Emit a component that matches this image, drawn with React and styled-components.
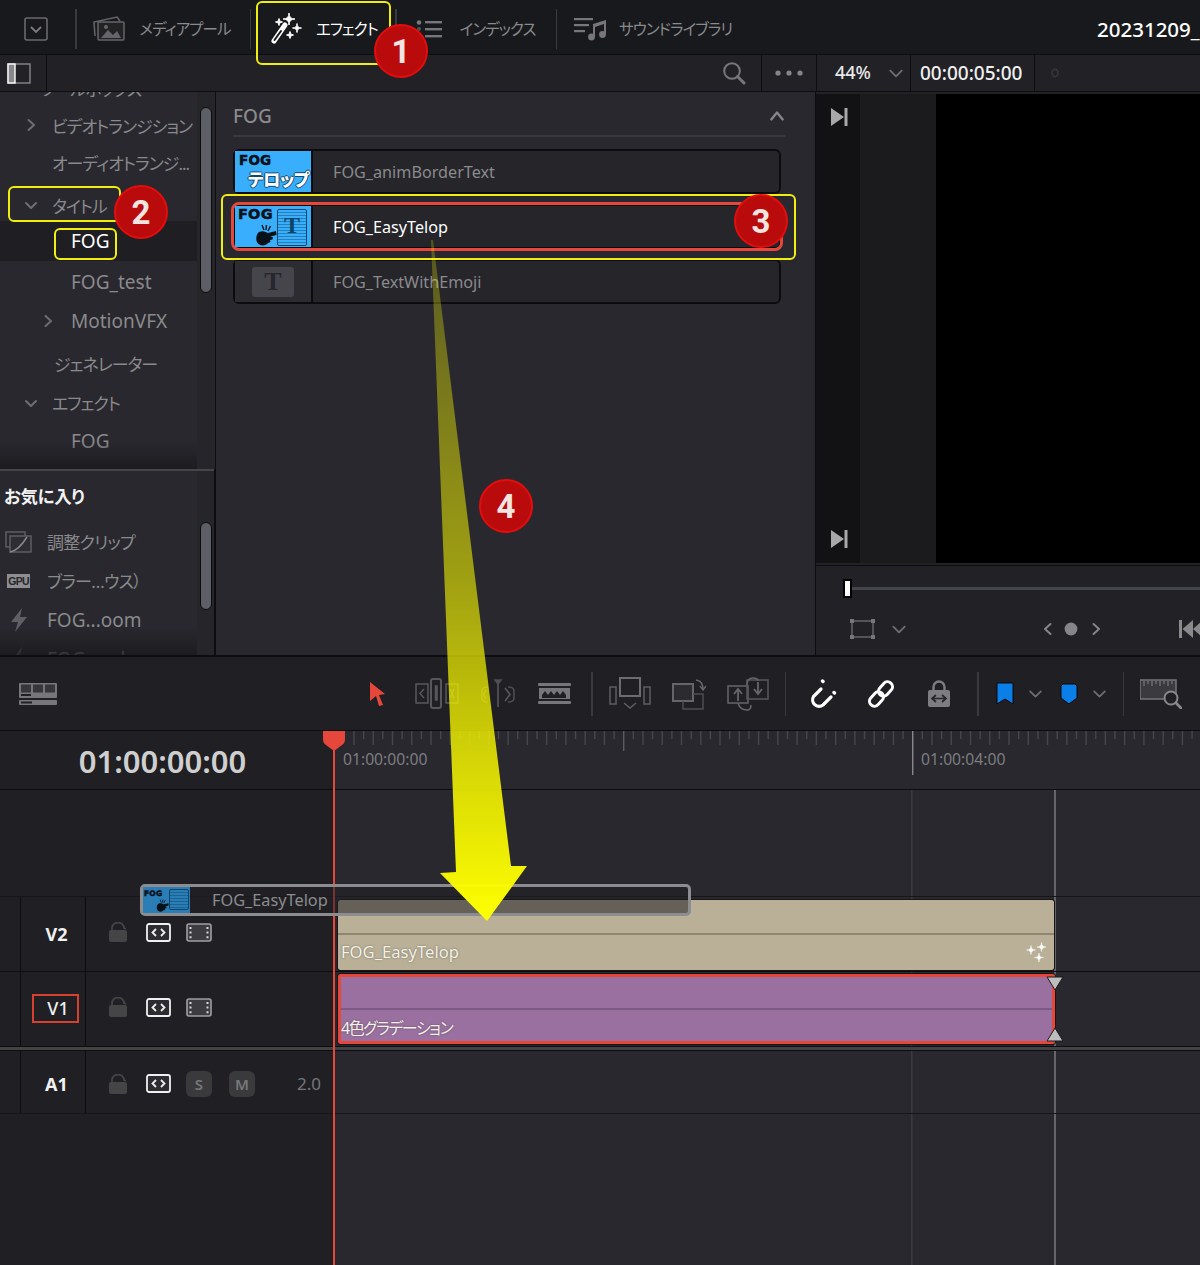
import React from 'react';
import styled, { createGlobalStyle } from 'styled-components';

const FONT = `"Noto Sans", "Noto Sans CJK JP", sans-serif`;
const GRAY = '#8a8a8c';
const ICON = '#6e6e72';
const RED = '#e5483a';

const GlobalStyle = createGlobalStyle`
  html, body { margin: 0; padding: 0; background: #1a1b1e; }
  body { font-family: ${FONT}; }
  * { box-sizing: border-box; }
`;

const Page = styled.div`
  position: relative;
  width: 1200px;
  height: 1265px;
  overflow: hidden;
  background: #0d0d0f;
  display: flex;
  flex-direction: column;
  font-feature-settings: "palt";
`;

/* top bar */
const TopBar = styled.div`
  height: 54px;
  flex-shrink: 0;
  background: #18191c;
  display: flex;
  align-items: center;
  margin-bottom: 1px;
  padding-top: 3px;
`;
const MenuBtn = styled.div`
  width: 75px;
  padding-left: 24px;
  display: flex;
`;
const Sep = styled.div`
  width: 1.5px;
  height: ${p => p.$h || 40}px;
  background: #3a3a3d;
  flex-shrink: 0;
`;
const Tab = styled.div`
  width: ${p => p.$w}px;
  padding-left: ${p => p.$pad}px;
  display: flex;
  align-items: center;
  gap: ${p => p.$gap}px;
  flex-shrink: 0;
`;
const TabLabel = styled.span`
  font-size: 15.5px;
  letter-spacing: -0.9px;
  color: ${p => (p.$on ? '#fff' : GRAY)};
  white-space: nowrap;
`;
const ProjectName = styled.div`
  margin-left: auto;
  width: 103px;
  flex-shrink: 0;
  overflow: hidden;
  white-space: nowrap;
  color: #fff;
  font-size: 20.5px;
  font-weight: 500;
`;

/* sub bar */
const SubBar = styled.div`
  height: 36px;
  flex-shrink: 0;
  display: flex;
  background: #212126;
  margin-bottom: 1px;
`;
const SubCell = styled.div`
  width: ${p => p.$w}px;
  flex: ${p => (p.$w ? 'none' : 1)};
  height: 100%;
  display: flex;
  align-items: center;
  justify-content: ${p => p.$justify || 'flex-start'};
  padding: ${p => p.$pad || '0'};
  border-right: ${p => (p.$line ? '1.5px solid #0d0d0f' : 'none')};
  gap: ${p => p.$gap || 0}px;
`;
const Zoom = styled.span`
  color: #e8e8e8;
  font-size: 18px;
  font-weight: 500;
  margin-top: -2px;
`;
const Timecode = styled.span`
  color: #f0f0f0;
  font-size: 19px;
  font-weight: 500;
`;

/* main panels */
const Main = styled.div`
  height: 563px;
  flex-shrink: 0;
  display: flex;
  margin-bottom: 2px;
`;
const Sidebar = styled.div`
  width: 214px;
  flex-shrink: 0;
  display: flex;
  flex-direction: column;
  background: #28282e;
  margin-right: 2px;
`;
const TreePane = styled.div`
  height: 379px;
  flex-shrink: 0;
  display: flex;
  border-bottom: 2px solid #45454a;
`;
const FavPane = styled.div`
  flex: 1;
  display: flex;
  min-height: 0;
  overflow: hidden;
`;
const ScrollList = styled.div`
  position: relative;
  width: 197px;
  overflow: hidden;
  flex-shrink: 0;
  &::after {
    content: '';
    position: absolute;
    left: 0;
    right: 0;
    bottom: 0;
    height: 28px;
    background: linear-gradient(to bottom, rgba(24, 24, 28, 0), rgba(24, 24, 28, 0.75));
  }
`;
const Gutter = styled.div`
  flex: 1;
  background: #25252a;
  padding: ${p => p.$top}px 3px 0;
`;
const Thumb = styled.div`
  height: ${p => p.$h}px;
  width: 12px;
  background: #5c6066;
  border: 1px solid #0b0b0d;
  border-radius: 6px;
`;
const TreeRow = styled.div`
  height: ${p => p.$h}px;
  margin-top: ${p => p.$mt || 0}px;
  padding-left: ${p => p.$indent}px;
  display: flex;
  align-items: center;
  position: relative;
  white-space: nowrap;
  background: ${p => (p.$sel ? '#1f1f23' : 'transparent')};
  color: ${p => (p.$sel ? '#fff' : GRAY)};
  font-size: ${p => (p.$latin ? 19 : 17)}px;
  letter-spacing: ${p => (p.$latin ? 0 : -1)}px;
`;
const Caret = styled.span`
  width: ${p => p.$w}px;
  display: flex;
  padding-right: ${p => p.$pr || 0}px;
`;
const FavTitle = styled.div`
  height: 51px;
  padding: 0 0 2px 4px;
  display: flex;
  align-items: center;
  color: #f2f2f2;
  font-size: 17.4px;
  font-weight: 600;
  letter-spacing: -0.3px;
`;
const FavRow = styled.div`
  height: 39px;
  display: flex;
  align-items: center;
  color: ${GRAY};
  font-size: ${p => (p.$latin ? 19 : 17)}px;
  letter-spacing: ${p => (p.$latin ? 0 : -0.7)}px;
  white-space: nowrap;
`;
const FavIconSlot = styled.span`
  width: 47px;
  padding-left: 5px;
  display: flex;
  flex-shrink: 0;
`;

const Center = styled.div`
  width: 599px;
  flex-shrink: 0;
  background: #28282e;
  padding: 0 30px 0 17px;
  margin-right: 1px;
`;
const BinHead = styled.div`
  height: 45px;
  display: flex;
  align-items: center;
  justify-content: space-between;
  border-bottom: 2px solid #38383e;
  padding: 5px 0 0 0;
  margin-bottom: 12px;
  color: ${GRAY};
  font-size: 19px;
  font-weight: 500;
`;
const CardList = styled.div`
  width: 548px;
  display: flex;
  flex-direction: column;
  gap: 10px;
`;
const Card = styled.div`
  height: 45px;
  display: flex;
  align-items: center;
  background: #25252a;
  border: 2px solid #0c0c0e;
  border-radius: 6px;
  color: ${p => (p.$sel ? '#fff' : GRAY)};
  font-size: 16.2px;
  outline: ${p => (p.$sel ? `3px solid ${RED}` : 'none')};
  outline-offset: -1px;
`;
const CardThumb = styled.div`
  position: relative;
  width: 78px;
  height: 100%;
  flex-shrink: 0;
  overflow: hidden;
  margin-right: 20px;
  border-right: 2px solid #0c0c0e;
  background: ${p => p.$bg};
  display: flex;
  align-items: center;
  justify-content: center;
`;
const FogMark = styled.span`
  position: absolute;
  left: ${p => p.$x}px;
  top: ${p => p.$y}px;
  color: #07111a;
  font-family: "DejaVu Sans", sans-serif;
  font-size: ${p => p.$size || 13.5}px;
  font-weight: 800;
  line-height: 1;
  letter-spacing: 0.2px;
  -webkit-text-stroke: 0.5px #07111a;
`;
const TelopMark = styled.span`
  position: absolute;
  right: 2px;
  bottom: 0;
  color: #fff;
  font-size: 17px;
  font-weight: 900;
  line-height: 24px;
  letter-spacing: -0.5px;
  text-shadow: -1px 0 #12496f, 1px 0 #12496f, 0 -1px #12496f, 0 1px #12496f;
`;
const HandSlot = styled.span`
  position: absolute;
  left: ${p => p.$x}px;
  top: ${p => p.$y}px;
  display: flex;
`;
const TFrame = styled.span`
  position: absolute;
  right: ${p => p.$small ? 1 : 4}px;
  top: ${p => p.$small ? 2 : 3}px;
  width: ${p => p.$small ? 20 : 30}px;
  height: ${p => p.$small ? 21 : 37}px;
  border: 1.5px solid #0a4469;
  border-radius: 2px;
  color: #0a4469;
  font-family: "Liberation Serif", serif;
  font-size: ${p => p.$small ? 14 : 24}px;
  font-weight: 700;
  line-height: ${p => p.$small ? 18 : 31}px;
  text-align: center;
  background: repeating-linear-gradient(to bottom, transparent 0 2px, rgba(10, 68, 105, 0.45) 2px 3px);
`;
const TBlank = styled.span`
  width: 42px;
  height: 30px;
  border-radius: 3px;
  background: #45454b;
  color: #26262b;
  font-family: "Liberation Serif", serif;
  font-size: 26px;
  font-weight: 700;
  line-height: 30px;
  text-align: center;
`;

const Monitor = styled.div`
  flex: 1;
  display: flex;
  flex-direction: column;
  background: #212126;
`;
const ViewerRow = styled.div`
  height: 469px;
  margin-top: 2px;
  flex-shrink: 0;
  display: flex;
  background: #1b1b1d;
`;
const SkipStrip = styled.div`
  width: 44px;
  background: #121214;
  display: flex;
  flex-direction: column;
  justify-content: space-between;
  align-items: center;
  padding: 14px 0 15px 3px;
`;
const Screen = styled.div`
  flex: 1;
  margin-left: 76px;
  background: #000;
`;
const ScrubRow = styled.div`
  height: 46px;
  margin-top: 2px;
  display: flex;
  align-items: center;
  padding-left: 27px;
  border-top: 1px solid #0d0d0f;
`;
const ScrubHandle = styled.div`
  width: 9px;
  height: 19px;
  background: #fff;
  border: 2px solid #000;
  flex-shrink: 0;
`;
const ScrubLine = styled.div`
  flex: 1;
  height: 3px;
  background: #44444c;
`;
const MonitorTools = styled.div`
  height: 36px;
  display: flex;
  align-items: center;
  padding-left: 34px;
`;
const ToolGap = styled.span`
  display: flex;
  margin-left: ${p => p.$ml}px;
  flex-shrink: 0;
`;

/* timeline */
const EditBar = styled.div`
  height: 73px;
  flex-shrink: 0;
  display: flex;
  align-items: center;
  background: #1f1f24;
  margin-bottom: 1px;
`;
const RulerRow = styled.div`
  height: 58px;
  flex-shrink: 0;
  display: flex;
  margin-bottom: 1px;
`;
const HeadCell = styled.div`
  width: 334px;
  flex-shrink: 0;
  background: #1f1f24;
  border-right: 1.5px solid #0d0d0f;
  display: flex;
  align-items: center;
  justify-content: center;
  color: #cfcfcf;
  font-size: 31px;
  font-weight: 600;
  padding: 2px 8px 0 0;
`;
const Ruler = styled.div`
  flex: 1;
  position: relative;
  background: #28282e;
  display: flex;
  align-items: flex-start;
  padding: 17px 0 0 9px;
  color: #7d7d80;
  font-size: 15.7px;
`;
const RulerTicks = styled.svg`
  position: absolute;
  left: 0;
  top: 0;
`;
const RulerLabel = styled.span`
  width: ${p => p.$w}px;
  flex-shrink: 0;
`;

const Tracks = styled.div`
  flex: 1;
  display: flex;
  flex-direction: column;
  background: #28282e;
  min-height: 0;
`;
const TrackRow = styled.div`
  height: ${p => p.$h}px;
  flex: ${p => (p.$h ? 'none' : 1)};
  display: flex;
  border-bottom: ${p => (p.$line ? `1px solid ${p.$line}` : 'none')};
`;
const TrackHead = styled.div`
  width: 334px;
  flex-shrink: 0;
  display: flex;
  align-items: center;
  background: #1f1f24;
  border-right: 1.5px solid #0d0d0f;
`;
const TrackPad = styled.div`
  width: 21px;
  height: 100%;
  border-right: 1.5px solid #0d0d0f;
  flex-shrink: 0;
`;
const TrackNameCell = styled.div`
  width: 65px;
  height: 100%;
  flex-shrink: 0;
  display: flex;
  align-items: center;
  justify-content: center;
  padding: ${p => (p.$nudge ? 3 : 0)}px 0 0 ${p => (p.$boxed ? 0 : 7)}px;
  border-right: 1.5px solid #0d0d0f;
`;
const TrackName = styled.span`
  color: #f0f0f0;
  font-size: 18px;
  font-weight: ${p => (p.$boxed ? 500 : 700)};
  display: flex;
  align-items: center;
  justify-content: center;
  ${p => p.$boxed && `
    width: 47px;
    height: 29px;
    margin: -2px 0 0 5px;
    padding-left: 5px;
    border: 2px solid #d5402f;
  `}
`;
const TrackControls = styled.div`
  display: flex;
  align-items: center;
  flex: 1;
  padding: ${p => p.$pt || 0}px 0 0 22px;
  margin-top: ${p => p.$mt || 0}px;
`;
const SoloBtn = styled.span`
  width: 26px;
  height: 26px;
  margin-left: ${p => p.$ml}px;
  border-radius: 6px;
  background: #3a3a3c;
  color: #77777a;
  font-size: 15px;
  font-weight: 600;
  display: flex;
  align-items: center;
  justify-content: center;
`;
const Gain = styled.span`
  margin-left: 42px;
  color: #77777a;
  font-size: 17px;
`;
const Lane = styled.div`
  flex: 1;
  position: relative;
  padding-left: 4px;
  background:
    linear-gradient(#3a3a3f, #3a3a3f) 577px 0 / 1.5px 100% no-repeat,
    linear-gradient(#66666a, #66666a) 720px 0 / 2px 100% no-repeat,
    #28282e;
`;
const Clip = styled.div`
  position: relative;
  width: ${p => (p.$sel ? 717 : 716)}px;
  height: 70px;
  margin-top: ${p => p.$mt}px;
  background: ${p => p.$bg};
  border-radius: 2px;
  border: ${p => (p.$sel ? `3px solid ${RED}` : 'none')};
  outline: 1px solid #161618;
  display: flex;
  flex-direction: column;
  color: #fff;
`;
const ClipTop = styled.div`
  height: ${p => (p.$sel ? 33 : 35)}px;
  flex-shrink: 0;
  border-bottom: 2px solid ${p => p.$line};
`;
const ClipName = styled.div`
  flex: 1;
  display: flex;
  align-items: center;
  padding: ${p => (p.$sel ? 5 : 0)}px 0 0 ${p => (p.$sel ? 0 : 3)}px;
  font-size: ${p => p.$size}px;
  letter-spacing: ${p => (p.$sel ? -1.5 : 0)}px;
  white-space: nowrap;
  line-height: 1;
  color: #f4f1e6;
  text-shadow: 0 0 2px rgba(40, 40, 40, 0.55);
`;
const Sparkles = styled.span`
  position: absolute;
  right: 6px;
  bottom: 7px;
  display: flex;
`;
const TrimMark = styled.svg`
  position: absolute;
  left: ${p => p.$x}px;
  top: ${p => p.$y}px;
  z-index: 2;
`;
const DividerBar = styled.div`
  height: 5px;
  flex-shrink: 0;
  background: #434346;
  border-top: 1px solid #0d0d0f;
  border-bottom: 1px solid #0d0d0f;
`;
const Playhead = styled.svg`
  position: absolute;
  left: 322px;
  top: 731px;
  z-index: 3;
`;

/* dragged clip floats over the timeline */
const DragGhost = styled.div`
  position: absolute;
  left: 140px;
  top: 884px;
  width: 551px;
  height: 32px;
  border: 3px solid #8c8d90;
  border-radius: 5px;
  background: rgba(32, 32, 36, 0.55);
  display: flex;
  align-items: center;
  color: #8c8c8e;
  font-size: 16.3px;
  z-index: 4;
`;
const GhostThumb = styled.div`
  position: relative;
  width: 47px;
  height: 100%;
  background: #2a7db5;
  margin-right: 22px;
  flex-shrink: 0;
  overflow: hidden;
`;

/* tutorial marks laid over the screenshot */
const Callout = styled.div`
  position: absolute;
  left: ${p => p.$x}px;
  top: ${p => p.$y}px;
  width: ${p => p.$w}px;
  height: ${p => p.$h}px;
  border: 2.5px solid #f0ee10;
  border-radius: 6px;
  z-index: 5;
`;
const Badge = styled.div`
  position: absolute;
  left: ${p => p.$x - 27}px;
  top: ${p => p.$y - 27}px;
  width: 54px;
  height: 54px;
  border-radius: 50%;
  background: #b90b0b;
  border: 2px solid #e40d0d;
  color: #f2e4e0;
  font-family: Roboto, sans-serif;
  font-size: 33px;
  font-weight: 700;
  display: flex;
  align-items: center;
  justify-content: center;
  z-index: 7;
`;
const BigArrow = styled.svg`
  position: absolute;
  left: 0;
  top: 0;
  z-index: 6;
  pointer-events: none;
`;

const Chevron = ({ dir = 'down', size = 14, color = ICON, sw = 2 }) => {
  const d = {
    down: 'M2 5 L7 10 L12 5',
    up: 'M2 10 L7 4 L12 10',
    right: 'M4.5 2 L10 7 L4.5 12',
    left: 'M9.5 2 L4 7 L9.5 12',
  }[dir];
  return (
    <svg width={size} height={size} viewBox="0 0 14 14" fill="none">
      <path d={d} stroke={color} strokeWidth={sw} strokeLinecap="round" strokeLinejoin="round" />
    </svg>
  );
};

const MenuIcon = () => (
  <svg width="24" height="24" viewBox="0 0 24 24" fill="none">
    <rect x="1" y="1" width="22" height="22" rx="2" stroke="#6a6a6e" strokeWidth="1.6" />
    <path d="M7 10 L12 15 L17 10" stroke="#7c7c80" strokeWidth="1.8" />
  </svg>
);
const MediaIcon = () => (
  <svg width="32" height="25" viewBox="0 0 32 25" fill="none" stroke="#66666a" strokeWidth="1.5">
    <path d="M2 20 L1 6 L24 1 L27 5" />
    <rect x="5" y="6" width="26" height="18" rx="1" fill="#232326" />
    <path d="M8 22 L15 14 L20 19 L24 15 L28 22 Z" fill="#66666a" stroke="none" />
    <circle cx="13" cy="11" r="2" fill="#66666a" stroke="none" />
  </svg>
);
const star = (x, y, r) =>
  `M${x} ${y - r} Q${x} ${y} ${x + r} ${y} Q${x} ${y} ${x} ${y + r} Q${x} ${y} ${x - r} ${y} Q${x} ${y} ${x} ${y - r} Z`;
const WandIcon = () => (
  <svg width="31" height="32" viewBox="0 0 31 32" fill="#fff">
    <path d="M3 28 L14 12" stroke="#fff" strokeWidth="5" strokeLinecap="round" />
    <path d="M3.5 27 L10 18" stroke="#18191c" strokeWidth="2" strokeLinecap="round" />
    <path d={star(18, 6, 6)} stroke="#fff" />
    <path d={star(26, 15, 4.5)} stroke="#fff" />
    <path d={star(8, 9, 3.5)} stroke="#fff" />
    <path d={star(19, 22, 3.5)} stroke="#fff" />
  </svg>
);
const IndexIcon = () => (
  <svg width="27" height="18" viewBox="0 0 27 18" fill="#77777b">
    <circle cx="3" cy="2.5" r="2.3" />
    <circle cx="3" cy="9" r="2" opacity="0.6" />
    <circle cx="3" cy="15.5" r="2.3" />
    <rect x="9" y="1" width="17" height="2.4" />
    <rect x="9" y="8" width="17" height="2.4" />
    <rect x="9" y="15" width="17" height="2.4" />
  </svg>
);
const SoundIcon = () => (
  <svg width="33" height="25" viewBox="0 0 33 25" fill="#77777b">
    <rect x="0" y="2" width="19" height="2.2" />
    <rect x="0" y="8" width="15" height="2.2" />
    <rect x="0" y="14" width="11" height="2.2" />
    <path d="M19 8 L32 4 L32 18 L30 18 L30 8 L21 11 L21 21 L19 21 Z" />
    <circle cx="17.5" cy="21" r="3.4" />
    <circle cx="28.5" cy="18.5" r="3.4" />
  </svg>
);
const PanelIcon = () => (
  <svg width="24" height="21" viewBox="0 0 24 21" fill="none">
    <rect x="1" y="1" width="22" height="19" stroke="#88888c" strokeWidth="1.4" />
    <rect x="1" y="1" width="7" height="19" fill="#88888c" stroke="#fff" strokeWidth="1.4" />
  </svg>
);
const SearchIcon = () => (
  <svg width="24" height="24" viewBox="0 0 24 24" fill="none" stroke="#77777b">
    <circle cx="10" cy="10" r="7.8" strokeWidth="2" />
    <path d="M15.5 15.5 L22 22" strokeWidth="3" strokeLinecap="round" />
  </svg>
);
const DotsIcon = () => (
  <svg width="28" height="8" viewBox="0 0 28 8" fill="#85858a">
    <circle cx="3" cy="4" r="2.6" />
    <circle cx="14" cy="4" r="2.6" />
    <circle cx="25" cy="4" r="2.6" />
  </svg>
);
const SkipIcon = () => (
  <svg width="17" height="18" viewBox="0 0 17 18" fill="#a8a8aa">
    <path d="M0 0 L13 9 L0 18 Z" />
    <rect x="13.5" y="0" width="3" height="18" />
  </svg>
);
const RateDot = () => (
  <svg width="8" height="10" viewBox="0 0 8 10" fill="none">
    <ellipse cx="4" cy="5" rx="3" ry="3.6" stroke="#38383b" strokeWidth="1.6" />
  </svg>
);
const CropIcon = () => (
  <svg width="25" height="20" viewBox="0 0 25 20" fill="#77777b" stroke="#77777b">
    <rect x="2" y="2" width="21" height="16" fill="none" strokeWidth="1.2" />
    <rect x="0.5" y="0.5" width="3" height="3" />
    <rect x="21.5" y="0.5" width="3" height="3" />
    <rect x="0.5" y="16.5" width="3" height="3" />
    <rect x="21.5" y="16.5" width="3" height="3" />
  </svg>
);
const NavDot = () => (
  <svg width="14" height="14" viewBox="0 0 14 14" fill="#85858a">
    <circle cx="7" cy="7" r="6.4" />
  </svg>
);
const RewindIcon = () => (
  <svg width="24" height="20" viewBox="0 0 24 20" fill="#8a8a8c">
    <rect x="0" y="1" width="3" height="18" />
    <path d="M3.5 10 L14 1 L14 19 Z" />
    <path d="M14 10 L24 1 L24 19 Z" />
  </svg>
);
const AdjustIcon = () => (
  <svg width="27" height="22" viewBox="0 0 27 22" fill="none" stroke="#5d5d62" strokeWidth="1.5">
    <rect x="1" y="1" width="19" height="15" />
    <rect x="5" y="5" width="21" height="16" fill="#2d2d33" />
    <path d="M5 21 C12 20 17 14 22 6" stroke="#88888c" />
  </svg>
);
const GpuIcon = () => (
  <svg width="25" height="16" viewBox="-2 0 25 16">
    <rect x="0" y="1" width="23" height="14" fill="#8e8e90" />
    <text x="11.5" y="12" textAnchor="middle" fontFamily="Liberation Sans, sans-serif" fontSize="10.5" fontWeight="700" fill="#26262b">GPU</text>
  </svg>
);
const BoltIcon = () => (
  <svg width="23" height="24" viewBox="-5 0 23 24" fill="#5f5f64">
    <path d="M12 0 L1 14 L8 14 L5 24 L17 9 L10 9 Z" />
  </svg>
);
const HandIcon = ({ size = 22, color = '#07111a' }) => (
  <svg width={size} height={size} viewBox="0 0 22 22" fill={color}>
    <path d="M4 8 C8 6 11 8 13 9 L21 7 L21.5 11 L15 12.5 L18 13 L17.5 15.5 L15 16 L15.5 18 L13 19 C11 22 5 22.5 2.5 19 C0.5 16 1 10 4 8 Z" />
    <path d="M7 1 L9 6 M11.5 1 L11 6 M15.5 2 L13 7" stroke={color} strokeWidth="1.4" fill="none" />
  </svg>
);
const LayoutIcon = () => (
  <svg width="38" height="22" viewBox="0 0 38 22" fill="#77777b">
    <rect x="0" y="0" width="38" height="15" rx="1" />
    <rect x="2" y="1.5" width="10" height="8" fill="#37373b" />
    <rect x="14" y="1.5" width="10" height="8" fill="#37373b" />
    <rect x="26" y="1.5" width="10" height="8" fill="#37373b" />
    <rect x="2" y="11" width="10" height="2" fill="#1f1f24" />
    <rect x="0" y="17" width="38" height="5" rx="1" />
    <rect x="2" y="18.5" width="11" height="2" fill="#1f1f24" />
  </svg>
);
const PointerIcon = () => (
  <svg width="20" height="26" viewBox="0 0 20 26" fill={RED}>
    <path d="M2 1 L17 13 L11 14 L15 24 L11 25 L8 15 L2 20 Z" />
  </svg>
);
const TrimIcon = () => (
  <svg width="44" height="32" viewBox="0 0 44 32" fill="none" stroke="#58585c" strokeWidth="1.5">
    <rect x="1" y="6" width="12" height="19" />
    <path d="M9 11 L5 15.5 L9 20" />
    <rect x="31" y="6" width="12" height="19" />
    <path d="M35 11 L39 20 M39 11 L35 20" />
    <rect x="16" y="1" width="10" height="29" rx="2" strokeWidth="2" />
    <rect x="20.5" y="8" width="1.5" height="14" fill="#58585c" />
  </svg>
);
const DynTrimIcon = () => (
  <svg width="36" height="30" viewBox="0 0 36 30" fill="none" stroke="#4e4e52" strokeWidth="1.6">
    <path d="M8 8 Q2 8 2 12 L2 19 Q2 23 8 23" />
    <path d="M6 11 L3.5 15.5 L6 20" />
    <path d="M28 8 Q34 8 34 12 L34 19 Q34 23 28 23" />
    <path d="M25 9 L30 15.5 L25 22" stroke="#58585c" />
    <path d="M18 3 L18 28" stroke="#58585c" />
    <path d="M15 1 L21 1 L18 5 Z" fill="#58585c" />
  </svg>
);
const BladeIcon = () => (
  <svg width="33" height="21" viewBox="0 0 33 21" fill="#77777b">
    <rect x="0" y="0" width="33" height="3" rx="1" />
    <rect x="0" y="18" width="33" height="3" rx="1" />
    <rect x="1" y="5" width="31" height="11" />
    <path d="M4 12 L7 8 L10 12 L13 8 L16 12 L19 8 L22 12 L25 8 L28 12 L28 15 L4 15 Z" fill="#1f1f24" />
  </svg>
);
const InsertIcon = () => (
  <svg width="42" height="33" viewBox="0 0 42 33" fill="none" stroke="#5e5e62" strokeWidth="1.5">
    <rect x="1" y="10" width="6" height="17" />
    <rect x="35" y="10" width="6" height="17" />
    <rect x="11" y="1" width="20" height="18" strokeWidth="2" stroke="#6c6c70" />
    <path d="M15 26 L21 31 L27 26" />
  </svg>
);
const OverwriteIcon = () => (
  <svg width="34" height="32" viewBox="0 0 34 32" fill="none" stroke="#66666a" strokeWidth="1.5">
    <rect x="1" y="6" width="20" height="17" fill="#2c2c30" strokeWidth="2" />
    <path d="M21 16 L31 16 L31 31 L11 31 L11 23" stroke="#4e4e52" />
    <path d="M24 2 Q31 3 31 11 M28 8 L31 12 L34 8" />
  </svg>
);
const ReplaceIcon = () => (
  <svg width="42" height="34" viewBox="0 0 42 34" fill="none" stroke="#66666a" strokeWidth="1.5">
    <rect x="1" y="9" width="20" height="17" />
    <rect x="20" y="3" width="21" height="19" stroke="#58585c" />
    <path d="M11 24 L11 13 M7 17 L11 12 L15 17" strokeWidth="1.8" />
    <path d="M31 5 L31 16 M27 12 L31 17 L35 12" strokeWidth="1.8" />
    <path d="M11 26 Q13 33 20 33 Q24 33 24 28" />
    <path d="M20 8 Q20 1 26 1 Q31 1 31 4" />
  </svg>
);
const MagnetIcon = () => (
  <svg width="28" height="30" viewBox="0 0 28 30" fill="none" stroke="#fff">
    <path d="M12 10 L4.5 17.5 A6.5 6.5 0 0 0 14 26 L22 18" strokeWidth="3.2" strokeLinecap="round" />
    <path d="M13.5 2 L14 2.5 M25 13.5 L25.5 14" strokeWidth="3.4" strokeLinecap="round" />
  </svg>
);
const LinkIcon = () => (
  <svg width="26" height="28" viewBox="0 0 26 28" fill="none" stroke="#fff" strokeWidth="3">
    <rect x="0.5" y="14" width="16" height="10" rx="5" transform="rotate(-48 8.5 19)" />
    <rect x="9.5" y="4" width="16" height="10" rx="5" transform="rotate(-48 17.5 9)" />
  </svg>
);
const LockLinkIcon = () => (
  <svg width="24" height="28" viewBox="0 0 24 28" fill="#7e7e82">
    <path d="M6.5 11 L6.5 7 A5.5 5.5 0 0 1 17.5 7 L17.5 11" fill="none" stroke="#7e7e82" strokeWidth="2.4" />
    <rect x="1" y="10" width="22" height="17" rx="2" />
    <path d="M9 15 L5 18.5 L9 22 M15 15 L19 18.5 L15 22 M5 18.5 L19 18.5" fill="none" stroke="#26262b" strokeWidth="1.7" />
  </svg>
);
const FlagIcon = () => (
  <svg width="18" height="23" viewBox="0 0 18 23" fill="#0b7fe8" stroke="#08080a">
    <path d="M1 1 L17 1 L17 22 L9 17 L1 22 Z" strokeWidth="1" />
  </svg>
);
const MarkerIcon = () => (
  <svg width="18" height="22" viewBox="0 0 18 22" fill="#0b7fe8" stroke="#08080a">
    <path d="M3 1 L15 1 L17 3 L17 15 L9 21 L1 15 L1 3 Z" strokeWidth="1" />
  </svg>
);
const RulerZoomIcon = () => (
  <svg width="42" height="30" viewBox="0 0 42 30" fill="none">
    <rect x="0" y="1" width="36" height="19" fill="#3b3b3f" stroke="#77777b" strokeWidth="1.5" />
    <path d="M4 2 V7 M8 2 V5 M12 2 V7 M16 2 V5 M20 2 V7 M24 2 V5 M28 2 V7 M32 2 V5" stroke="#85858a" />
    <circle cx="31" cy="19" r="6.5" fill="#1f1f24" stroke="#88888c" strokeWidth="2" />
    <path d="M36 24 L41 29" stroke="#88888c" strokeWidth="2.6" strokeLinecap="round" />
  </svg>
);
const LockIcon = () => (
  <svg width="20" height="20" viewBox="0 0 20 20" fill="#454548">
    <path d="M4 9 L4 6 A6 5.4 0 0 1 16 6 L18 7" fill="none" stroke="#454548" strokeWidth="1.8" />
    <rect x="1" y="8" width="18" height="12" rx="2" />
  </svg>
);
const CodeIcon = () => (
  <svg width="25" height="19" viewBox="0 0 25 19" fill="none" stroke="#f0f0f0">
    <rect x="1" y="1" width="23" height="17" rx="2" strokeWidth="1.8" fill="#2d2d31" />
    <path d="M10 6 L6.5 9.5 L10 13 M15 6 L18.5 9.5 L15 13" strokeWidth="1.8" />
  </svg>
);
const FilmIcon = () => (
  <svg width="26" height="19" viewBox="0 0 26 19" fill="#3d3d41" stroke="#a0a0a3">
    <rect x="1" y="1" width="24" height="17" rx="2" strokeWidth="1.6" />
    <path d="M4.5 4 V15.5 M21.5 4 V15.5" stroke="#d8d8d8" strokeWidth="2" strokeDasharray="2 2.6" />
  </svg>
);
const SparkleIcon = () => (
  <svg width="22" height="22" viewBox="0 0 22 22" fill="#fff">
    <path d={star(5, 9, 4.5)} stroke="#fff" strokeWidth="0.5" />
    <path d={star(15.5, 6, 4.5)} stroke="#fff" strokeWidth="0.5" />
    <path d={star(13, 16.5, 4.5)} stroke="#fff" strokeWidth="0.5" />
  </svg>
);

// 15 ticks per second, 144.5px per second
const ticks = Array.from({ length: 90 }, (_, i) => {
  const major = i % 60 === 0;
  const second = i % 30 === 0;
  return {
    x: i * (144.5 / 15),
    h: i === 0 ? 0 : major ? 44 : second ? 20 : i % 2 === 0 ? 14 : 8,
    c: major ? '#88888c' : second ? '#5b5b60' : '#46464c',
  };
});

const App = () => (
  <Page>
    <GlobalStyle />

    <TopBar>
      <MenuBtn><MenuIcon /></MenuBtn>
      <Sep />
      <Tab $w={173} $pad={16} $gap={15}><MediaIcon /><TabLabel>メディアプール</TabLabel></Tab>
      <Sep />
      <Tab $w={144} $pad={20} $gap={14}><WandIcon /><TabLabel $on>エフェクト</TabLabel></Tab>
      <Sep />
      <Tab $w={159} $pad={19} $gap={17}><IndexIcon /><TabLabel>インデックス</TabLabel></Tab>
      <Sep />
      <Tab $w={200} $pad={17} $gap={12}><SoundIcon /><TabLabel>サウンドライブラリ</TabLabel></Tab>
      <ProjectName>20231209_</ProjectName>
    </TopBar>

    <SubBar>
      <SubCell $w={47} $line $pad="0 0 0 7px"><PanelIcon /></SubCell>
      <SubCell $w={715} $line $justify="flex-end" $pad="0 15px 0 0"><SearchIcon /></SubCell>
      <SubCell $w={55} $line $justify="center"><DotsIcon /></SubCell>
      <SubCell $w={94} $line $pad="0 0 0 18px" $gap={17}>
        <Zoom>44%</Zoom>
        <Chevron size={16} sw={1.6} />
      </SubCell>
      <SubCell $w={124} $line $pad="0 0 0 9px"><Timecode>00:00:05:00</Timecode></SubCell>
      <SubCell $pad="0 0 0 16px"><RateDot /></SubCell>
    </SubBar>

    <Main>
      <Sidebar>
        <TreePane>
          <ScrollList>
            <TreeRow $h={36} $mt={-22} $indent={40}>ツールボックス</TreeRow>
            <TreeRow $h={38} $indent={24}>
              <Caret $w={28} $pr={14}><Chevron dir="right" /></Caret>ビデオトランジション
            </TreeRow>
            <TreeRow $h={36} $indent={52}>オーディオトランジ...</TreeRow>
            <TreeRow $h={32} $mt={9} $indent={24}>
              <Caret $w={28} $pr={14}><Chevron /></Caret>タイトル
            </TreeRow>
            <TreeRow $h={40} $indent={71} $sel $latin>FOG</TreeRow>
            <TreeRow $h={39} $mt={1} $indent={71} $latin>FOG_test</TreeRow>
            <TreeRow $h={39} $indent={41} $latin>
              <Caret $w={30} $pr={16}><Chevron dir="right" /></Caret>MotionVFX
            </TreeRow>
            <TreeRow $h={43} $mt={2} $indent={54}>ジェネレーター</TreeRow>
            <TreeRow $h={35} $indent={24}>
              <Caret $w={28} $pr={14}><Chevron /></Caret>エフェクト
            </TreeRow>
            <TreeRow $h={41} $indent={71} $latin>FOG</TreeRow>
          </ScrollList>
          <Gutter $top={15}><Thumb $h={186} /></Gutter>
        </TreePane>
        <FavPane>
          <ScrollList>
            <FavTitle>お気に入り</FavTitle>
            <FavRow><FavIconSlot><AdjustIcon /></FavIconSlot>調整クリップ</FavRow>
            <FavRow><FavIconSlot><GpuIcon /></FavIconSlot>ブラー…ウス）</FavRow>
            <FavRow $latin><FavIconSlot><BoltIcon /></FavIconSlot>FOG...oom</FavRow>
            <FavRow $latin><FavIconSlot><BoltIcon /></FavIconSlot>FOG...ask</FavRow>
          </ScrollList>
          <Gutter $top={51}><Thumb $h={88} /></Gutter>
        </FavPane>
      </Sidebar>

      <Center>
        <BinHead>
          FOG
          <Chevron dir="up" size={16} color="#88888c" />
        </BinHead>
        <CardList>
          <Card>
            <CardThumb $bg="#38aefc">
              <FogMark $x={4} $y={3}>FOG</FogMark>
              <TelopMark>テロップ</TelopMark>
            </CardThumb>
            FOG_animBorderText
          </Card>
          <Card $sel>
            <CardThumb $bg="#38aefc">
              <FogMark $x={3} $y={1} $size={14.5}>FOG</FogMark>
              <HandSlot $x={20} $y={18}><HandIcon /></HandSlot>
              <TFrame>T</TFrame>
            </CardThumb>
            FOG_EasyTelop
          </Card>
          <Card>
            <CardThumb $bg="#2c2c31"><TBlank>T</TBlank></CardThumb>
            FOG_TextWithEmoji
          </Card>
        </CardList>
      </Center>

      <Monitor>
        <ViewerRow>
          <SkipStrip><SkipIcon /><SkipIcon /></SkipStrip>
          <Screen />
        </ViewerRow>
        <ScrubRow><ScrubHandle /><ScrubLine /></ScrubRow>
        <MonitorTools>
          <CropIcon />
          <ToolGap $ml={16}><Chevron size={16} sw={1.6} /></ToolGap>
          <ToolGap $ml={134}><Chevron dir="left" size={14} color="#85858a" /></ToolGap>
          <ToolGap $ml={9}><NavDot /></ToolGap>
          <ToolGap $ml={11}><Chevron dir="right" size={14} color="#85858a" /></ToolGap>
          <ToolGap $ml={76}><RewindIcon /></ToolGap>
        </MonitorTools>
      </Monitor>
    </Main>

    <EditBar>
      <ToolGap $ml={19}><LayoutIcon /></ToolGap>
      <ToolGap $ml={311}><PointerIcon /></ToolGap>
      <ToolGap $ml={27}><TrimIcon /></ToolGap>
      <ToolGap $ml={21}><DynTrimIcon /></ToolGap>
      <ToolGap $ml={22}><BladeIcon /></ToolGap>
      <ToolGap $ml={20}><Sep $h={44} /></ToolGap>
      <ToolGap $ml={16}><InsertIcon /></ToolGap>
      <ToolGap $ml={21}><OverwriteIcon /></ToolGap>
      <ToolGap $ml={21}><ReplaceIcon /></ToolGap>
      <ToolGap $ml={16}><Sep $h={44} /></ToolGap>
      <ToolGap $ml={23}><MagnetIcon /></ToolGap>
      <ToolGap $ml={31}><LinkIcon /></ToolGap>
      <ToolGap $ml={33}><LockLinkIcon /></ToolGap>
      <ToolGap $ml={26}><Sep $h={44} /></ToolGap>
      <ToolGap $ml={17}><FlagIcon /></ToolGap>
      <ToolGap $ml={14}><Chevron size={15} sw={1.6} /></ToolGap>
      <ToolGap $ml={17}><MarkerIcon /></ToolGap>
      <ToolGap $ml={14}><Chevron size={15} sw={1.6} /></ToolGap>
      <ToolGap $ml={16}><Sep $h={44} /></ToolGap>
      <ToolGap $ml={16}><RulerZoomIcon /></ToolGap>
    </EditBar>

    <RulerRow>
      <HeadCell>01:00:00:00</HeadCell>
      <Ruler>
        <RulerTicks width="866" height="58">
          {ticks.map(t => (
            <rect key={t.x} x={t.x} y="0" width="1.4" height={t.h} fill={t.c} />
          ))}
        </RulerTicks>
        <RulerLabel $w={578}>01:00:00:00</RulerLabel>
        <RulerLabel $w={120}>01:00:04:00</RulerLabel>
      </Ruler>
    </RulerRow>

    <Tracks>
      <TrackRow $h={107} $line="#16161a">
        <TrackHead />
        <Lane />
      </TrackRow>
      <TrackRow $h={75} $line="#0d0d0f">
        <TrackHead>
          <TrackPad />
          <TrackNameCell><TrackName>V2</TrackName></TrackNameCell>
          <TrackControls $mt={-4}>
            <LockIcon />
            <ToolGap $ml={18}><CodeIcon /></ToolGap>
            <ToolGap $ml={15}><FilmIcon /></ToolGap>
          </TrackControls>
        </TrackHead>
        <Lane>
          <Clip $bg="#b9b097" $mt={3}>
            <ClipTop $line="#8c8673" />
            <ClipName $size={16.6}>FOG_EasyTelop</ClipName>
            <Sparkles><SparkleIcon /></Sparkles>
          </Clip>
        </Lane>
      </TrackRow>
      <TrackRow $h={74}>
        <TrackHead>
          <TrackPad />
          <TrackNameCell $boxed><TrackName $boxed>V1</TrackName></TrackNameCell>
          <TrackControls $mt={-4}>
            <LockIcon />
            <ToolGap $ml={18}><CodeIcon /></ToolGap>
            <ToolGap $ml={15}><FilmIcon /></ToolGap>
          </TrackControls>
        </TrackHead>
        <Lane>
          <Clip $bg="#9a70a0" $mt={2} $sel>
            <ClipTop $sel $line="#7d5a84" />
            <ClipName $sel $size={16}>4色グラデーション</ClipName>
            <TrimMark $x={705} $y={-1} width="18" height="15" viewBox="0 0 18 15" fill="#bdbdbd" stroke="#1b1b1d">
              <path d="M1 1 L17 1 L9 14 Z" />
            </TrimMark>
            <TrimMark $x={705} $y={50} width="18" height="15" viewBox="0 0 18 15" fill="#bdbdbd" stroke="#1b1b1d">
              <path d="M9 1 L17 14 L1 14 Z" />
            </TrimMark>
          </Clip>
        </Lane>
      </TrackRow>
      <DividerBar />
      <TrackRow $h={63} $line="#16161a">
        <TrackHead>
          <TrackPad />
          <TrackNameCell $nudge><TrackName>A1</TrackName></TrackNameCell>
          <TrackControls $pt={3}>
            <LockIcon />
            <ToolGap $ml={18}><CodeIcon /></ToolGap>
            <SoloBtn $ml={15}>S</SoloBtn>
            <SoloBtn $ml={17}>M</SoloBtn>
            <Gain>2.0</Gain>
          </TrackControls>
        </TrackHead>
        <Lane />
      </TrackRow>
      <TrackRow>
        <TrackHead />
        <Lane />
      </TrackRow>
    </Tracks>

    <Playhead width="24" height="534" viewBox="0 0 24 534" fill={RED}>
      <path d="M1 0 L23 0 L23 9 Q23 12 20 14 L12 20 L4 14 Q1 12 1 9 Z" />
      <rect x="11" y="16" width="2" height="518" />
    </Playhead>

    <DragGhost>
      <GhostThumb>
        <FogMark $x={1} $y={3} $size={7.5}>FOG</FogMark>
        <HandSlot $x={13} $y={12}><HandIcon size={13} /></HandSlot>
        <TFrame $small />
      </GhostThumb>
      FOG_EasyTelop
    </DragGhost>

    <Callout $x={256} $y={1} $w={135} $h={64} />
    <Callout $x={8} $y={186} $w={113} $h={36} />
    <Callout $x={54} $y={228} $w={63} $h={32} />
    <Callout $x={221} $y={194} $w={575} $h={66} />

    <BigArrow width="1200" height="1265" viewBox="0 0 1200 1265">
      <defs>
        <linearGradient id="fade" x1="0" y1="240" x2="0" y2="921" gradientUnits="userSpaceOnUse">
          <stop offset="0" stopColor="#ffff00" stopOpacity="0.22" />
          <stop offset="0.5" stopColor="#f0f000" stopOpacity="0.6" />
          <stop offset="0.8" stopColor="#f4f400" stopOpacity="0.88" />
          <stop offset="1" stopColor="#ffff00" />
        </linearGradient>
      </defs>
      <path d="M431 240 L433 240 L511 866 L527 866 L487 921 L440 873 L456 872 Z" fill="url(#fade)" />
    </BigArrow>

    <Badge $x={401} $y={51}>1</Badge>
    <Badge $x={141} $y={212}>2</Badge>
    <Badge $x={761} $y={221}>3</Badge>
    <Badge $x={506} $y={506}>4</Badge>
  </Page>
);

export default App;
